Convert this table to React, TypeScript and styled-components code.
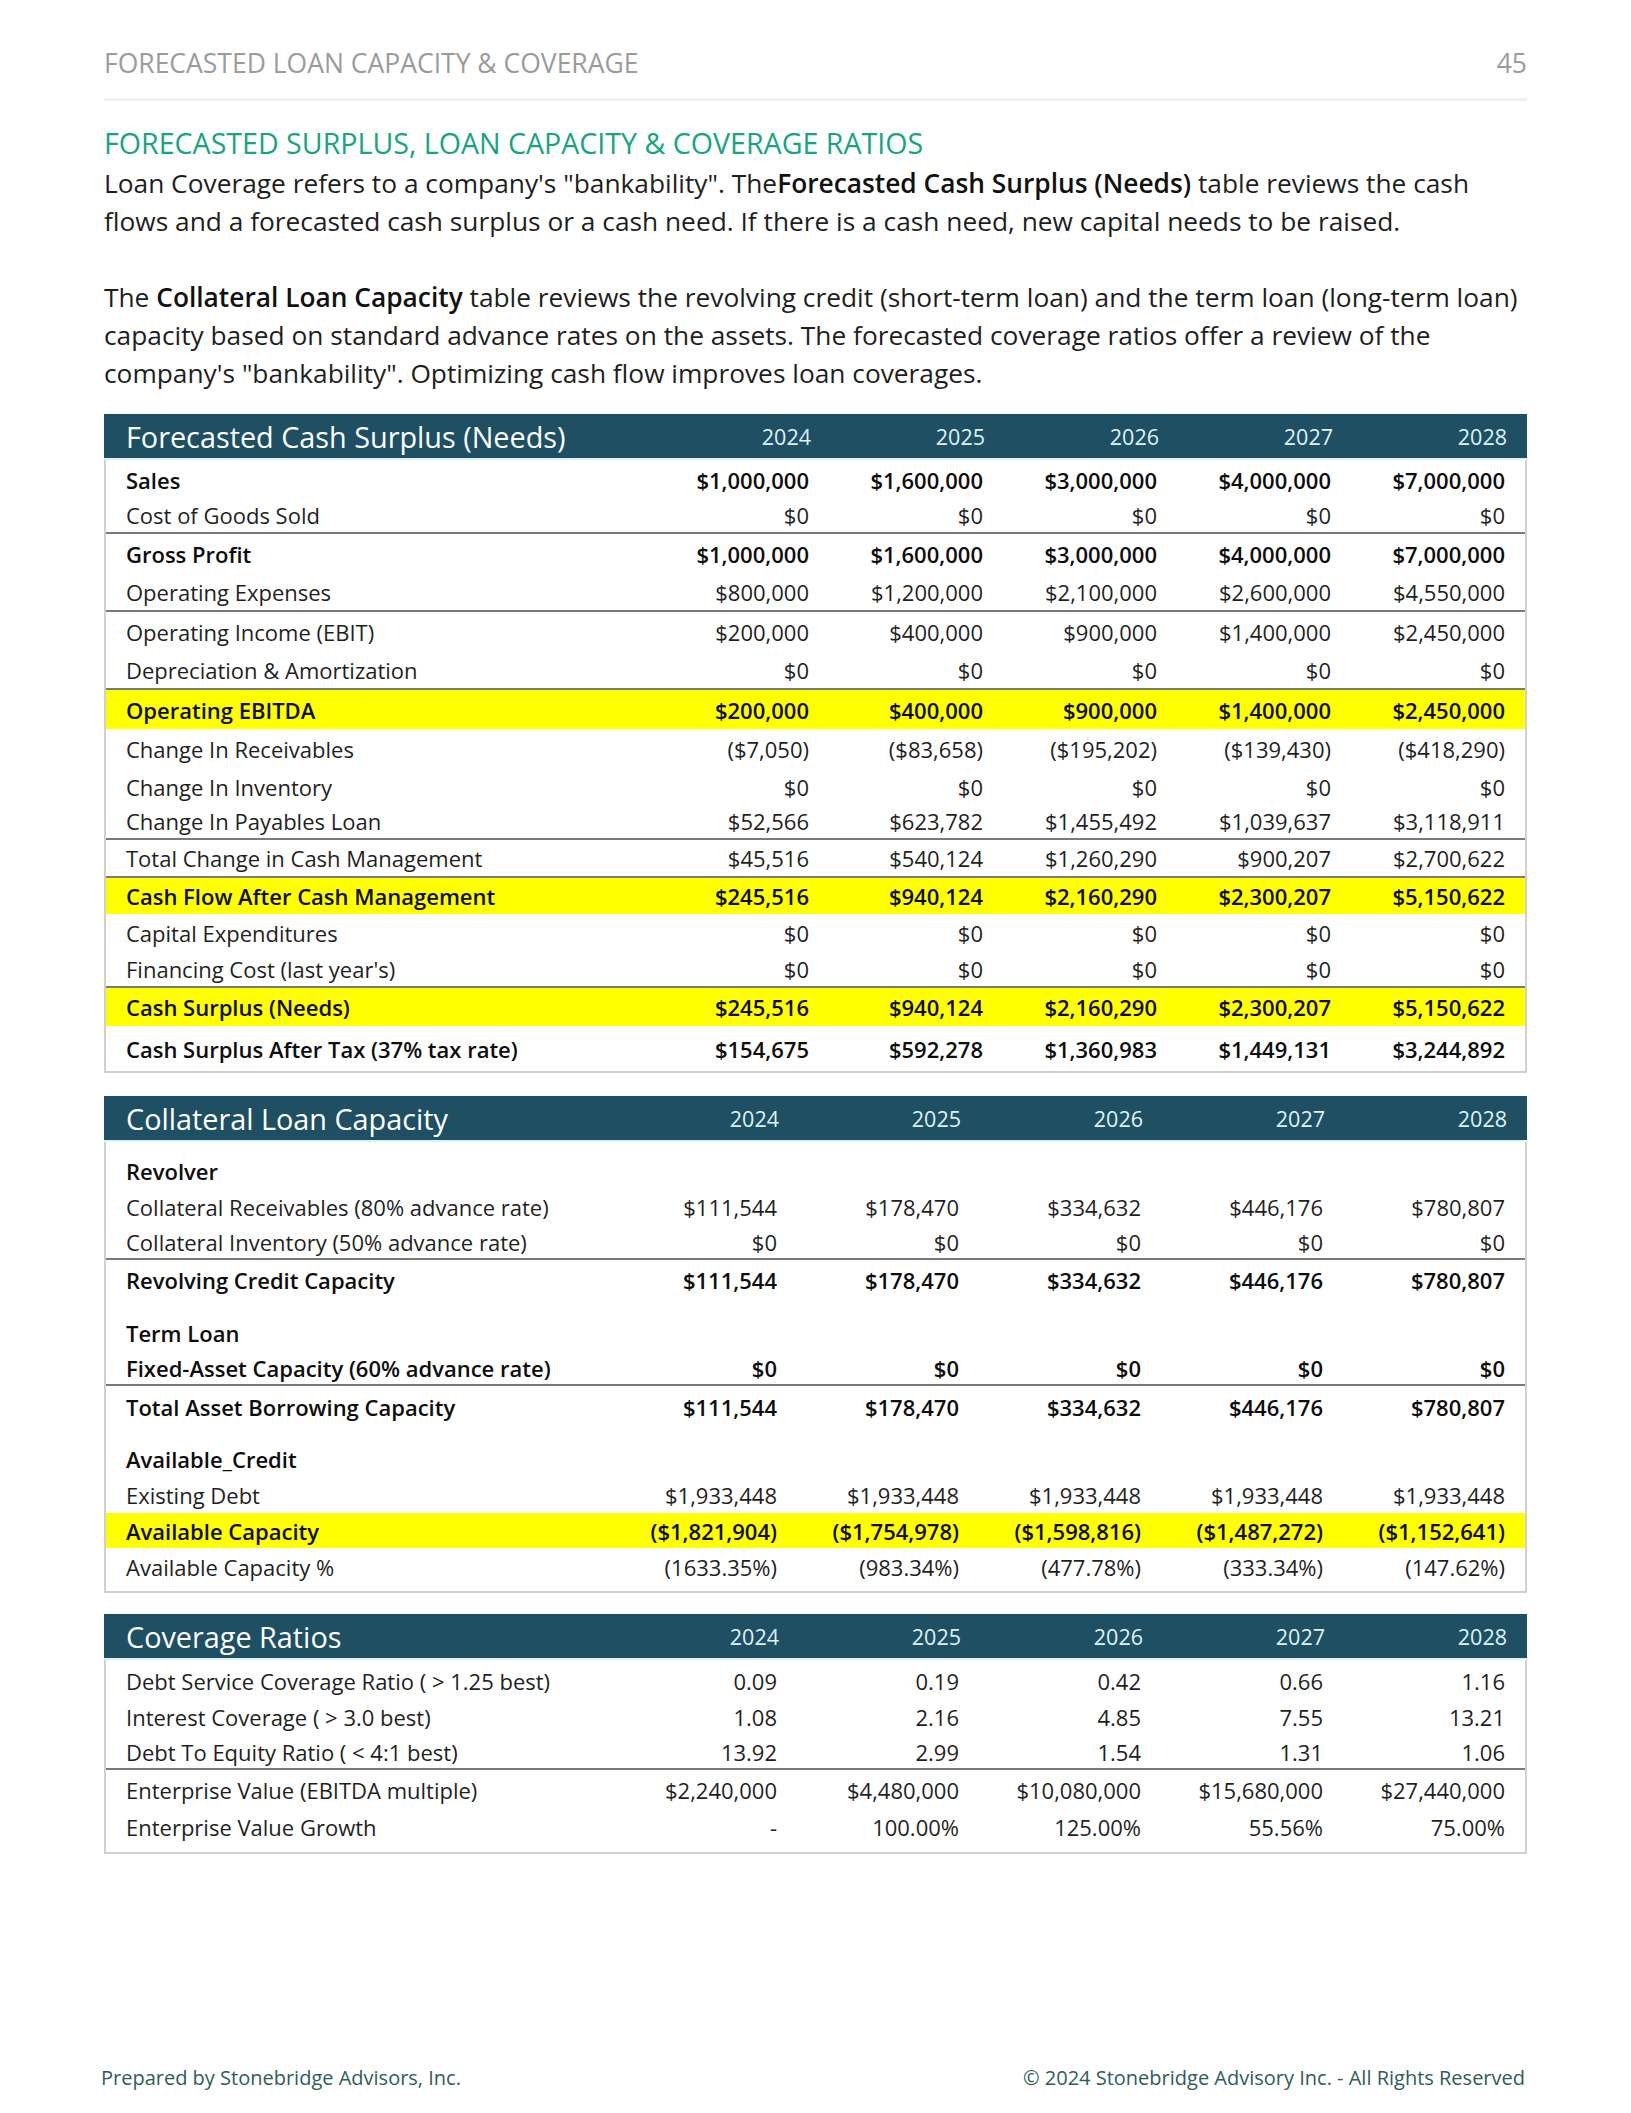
import React from "react"
import styled, { createGlobalStyle } from "styled-components"

const GlobalStyle = createGlobalStyle`
html, body {
  margin: 0;
  padding: 0;
  background: #fff;
}
body {
  font-family: "Open Sans", "Noto Sans", sans-serif;
  color: #1a1a1a;
}
`

const Page = styled.div`
width: 1631px;
height: 2113px;
box-sizing: border-box;
padding: 43px 104px 0 104px;
display: flex;
flex-direction: column;
`

const TopBar = styled.div`
display: flex;
justify-content: space-between;
align-items: center;
height: 40px;
padding-bottom: 15px;
border-bottom: 3px solid #efefef;
font-size: 26.5px;
color: #9b9b9b;
`

const SectionTitle = styled.h2`
margin: 23px 0 0 0;
font-size: 28.6px;
font-weight: 500;
color: #17a57f;
line-height: 38px;
`

const Para = styled.p<{ $gap?: number }>`
margin: ${props => props.$gap || 0}px 0 0 0;
font-size: 26.3px;
line-height: 38px;
color: #1e1e1e;
b { font-weight: 600; color: #111; }
`

const Table = styled.div<{ $top: number }>`
margin-top: ${props => props.$top}px;
border: 2px solid #d0d0d0;
border-top: none;
display: flex;
flex-direction: column;
`

const HeadRow = styled.div<{ $cols: string }>`
display: grid;
grid-template-columns: ${props => props.$cols};
align-items: center;
box-sizing: border-box;
height: 46px;
margin: 0 -2px;
padding: 0 20px 0 22px;
background: #1e4f63;
border-bottom: 2px solid #d9f3f7;
`

const HeadTitle = styled.div`
font-size: 28.8px;
color: #ffffff;
white-space: nowrap;
`

const HeadYear = styled.div`
font-size: 21.5px;
color: #def3f6;
text-align: right;
`

const Row = styled.div<{ $cols: string; $h: number; $pt?: number; $pb?: number; $hl?: boolean; $bold?: boolean; $line?: boolean }>`
display: grid;
grid-template-columns: ${props => props.$cols};
align-items: center;
box-sizing: border-box;
height: ${props => props.$h}px;
padding: ${props => props.$pt || 0}px 20px ${props => props.$pb || 0}px 20px;
background: ${props => props.$hl ? "#ffff00" : "transparent"};
font-size: 22px;
font-weight: ${props => props.$bold ? 600 : 400};
color: ${props => props.$bold ? "#0d0d0d" : "#1f1f1f"};
border-bottom: ${props => props.$line ? "2px solid #7a7a7a" : "none"};
`

const Label = styled.div`
white-space: nowrap;
`

const Num = styled.div`
text-align: right;
white-space: nowrap;
`

const Filler = styled.div`
flex: 1;
`

const Footer = styled.div`
display: flex;
justify-content: space-between;
align-items: center;
height: 40px;
margin: 0 2px 16px -3px;
font-size: 20px;
color: #2f5d58;
`

type RowData = {
  label: string
  values?: string[]
  h: number
  pt?: number
  pb?: number
  hl?: boolean
  bold?: boolean
  line?: boolean
}

const years = ["2024", "2025", "2026", "2027", "2028"]

const cashCols = "1fr 174px 174px 174px 174px 174px"
const wideCols = "1fr 182px 182px 182px 182px 182px"

const cashRows: RowData[] = [
  { label: "Sales", values: ["$1,000,000", "$1,600,000", "$3,000,000", "$4,000,000", "$7,000,000"], h: 38, pt: 2, bold: true },
  { label: "Cost of Goods Sold", values: ["$0", "$0", "$0", "$0", "$0"], h: 36, line: true },
  { label: "Gross Profit", values: ["$1,000,000", "$1,600,000", "$3,000,000", "$4,000,000", "$7,000,000"], h: 40, bold: true },
  { label: "Operating Expenses", values: ["$800,000", "$1,200,000", "$2,100,000", "$2,600,000", "$4,550,000"], h: 38, line: true },
  { label: "Operating Income (EBIT)", values: ["$200,000", "$400,000", "$900,000", "$1,400,000", "$2,450,000"], h: 39 },
  { label: "Depreciation & Amortization", values: ["$0", "$0", "$0", "$0", "$0"], h: 39, line: true },
  { label: "Operating EBITDA", values: ["$200,000", "$400,000", "$900,000", "$1,400,000", "$2,450,000"], h: 39, hl: true, bold: true },
  { label: "Change In Receivables", values: ["($7,050)", "($83,658)", "($195,202)", "($139,430)", "($418,290)"], h: 40 },
  { label: "Change In Inventory", values: ["$0", "$0", "$0", "$0", "$0"], h: 35 },
  { label: "Change In Payables Loan", values: ["$52,566", "$623,782", "$1,455,492", "$1,039,637", "$3,118,911"], h: 36, line: true },
  { label: "Total Change in Cash Management", values: ["$45,516", "$540,124", "$1,260,290", "$900,207", "$2,700,622"], h: 38, line: true },
  { label: "Cash Flow After Cash Management", values: ["$245,516", "$940,124", "$2,160,290", "$2,300,207", "$5,150,622"], h: 36, hl: true, bold: true },
  { label: "Capital Expenditures", values: ["$0", "$0", "$0", "$0", "$0"], h: 38 },
  { label: "Financing Cost (last year's)", values: ["$0", "$0", "$0", "$0", "$0"], h: 36, line: true },
  { label: "Cash Surplus (Needs)", values: ["$245,516", "$940,124", "$2,160,290", "$2,300,207", "$5,150,622"], h: 38, hl: true, bold: true },
  { label: "Cash Surplus After Tax (37% tax rate)", values: ["$154,675", "$592,278", "$1,360,983", "$1,449,131", "$3,244,892"], h: 45, pt: 1, bold: true },
]

const collateralRows: RowData[] = [
  { label: "Revolver", h: 47, pt: 10, bold: true },
  { label: "Collateral Receivables (80% advance rate)", values: ["$111,544", "$178,470", "$334,632", "$446,176", "$780,807"], h: 36 },
  { label: "Collateral Inventory (50% advance rate)", values: ["$0", "$0", "$0", "$0", "$0"], h: 35, line: true },
  { label: "Revolving Credit Capacity", values: ["$111,544", "$178,470", "$334,632", "$446,176", "$780,807"], h: 39, bold: true },
  { label: "Term Loan", h: 52, pt: 16, bold: true },
  { label: "Fixed-Asset Capacity (60% advance rate)", values: ["$0", "$0", "$0", "$0", "$0"], h: 35, bold: true, line: true },
  { label: "Total Asset Borrowing Capacity", values: ["$111,544", "$178,470", "$334,632", "$446,176", "$780,807"], h: 41, bold: true },
  { label: "Available_Credit", h: 49, pt: 14, bold: true },
  { label: "Existing Debt", values: ["$1,933,448", "$1,933,448", "$1,933,448", "$1,933,448", "$1,933,448"], h: 37 },
  { label: "Available Capacity", values: ["($1,821,904)", "($1,754,978)", "($1,598,816)", "($1,487,272)", "($1,152,641)"], h: 35, hl: true, bold: true },
  { label: "Available Capacity %", values: ["(1633.35%)", "(983.34%)", "(477.78%)", "(333.34%)", "(147.62%)"], h: 43, pb: 5 },
]

const coverageRows: RowData[] = [
  { label: "Debt Service Coverage Ratio ( > 1.25 best)", values: ["0.09", "0.19", "0.42", "0.66", "1.16"], h: 39, pt: 3 },
  { label: "Interest Coverage ( > 3.0 best)", values: ["1.08", "2.16", "4.85", "7.55", "13.21"], h: 36 },
  { label: "Debt To Equity Ratio ( < 4:1 best)", values: ["13.92", "2.99", "1.54", "1.31", "1.06"], h: 35, line: true },
  { label: "Enterprise Value (EBITDA multiple)", values: ["$2,240,000", "$4,480,000", "$10,080,000", "$15,680,000", "$27,440,000"], h: 40 },
  { label: "Enterprise Value Growth", values: ["-", "100.00%", "125.00%", "55.56%", "75.00%"], h: 42, pb: 9 },
]

const DataTable: React.FC<{ title: string; cols: string; rows: RowData[]; top: number }> = ({ title, cols, rows, top }) => {
  return (
    <Table $top={top}>
      <HeadRow $cols={cols}>
        <HeadTitle>{title}</HeadTitle>
        {years.map(y => <HeadYear key={y}>{y}</HeadYear>)}
      </HeadRow>
      {rows.map((r, i) => (
        <Row key={i} $cols={cols} $h={r.h} $pt={r.pt} $pb={r.pb} $hl={r.hl} $bold={r.bold} $line={r.line}>
          <Label>{r.label}</Label>
          {(r.values || ["", "", "", "", ""]).map((v, j) => <Num key={j}>{v}</Num>)}
        </Row>
      ))}
    </Table>
  )
}

const App: React.FC = () => {
  return (
    <>
      <GlobalStyle />
      <Page>
        <TopBar>
          <span>FORECASTED LOAN CAPACITY &amp; COVERAGE</span>
          <span>45</span>
        </TopBar>
        <SectionTitle>FORECASTED SURPLUS, LOAN CAPACITY &amp; COVERAGE RATIOS</SectionTitle>
        <Para $gap={2}>
          Loan Coverage refers to a company's "bankability". The<b>Forecasted Cash Surplus (Needs)</b> table reviews the cash flows and a forecasted cash surplus or a cash need. If there is a cash need, new capital needs to be raised.
        </Para>
        <Para $gap={38}>
          The <b>Collateral Loan Capacity</b> table reviews the revolving credit (short-term loan) and the term loan (long-term loan) capacity based on standard advance rates on the assets. The forecasted coverage ratios offer a review of the company's "bankability". Optimizing cash flow improves loan coverages.
        </Para>
        <DataTable title="Forecasted Cash Surplus (Needs)" cols={cashCols} rows={cashRows} top={22} />
        <DataTable title="Collateral Loan Capacity" cols={wideCols} rows={collateralRows} top={23} />
        <DataTable title="Coverage Ratios" cols={wideCols} rows={coverageRows} top={21} />
        <Filler />
        <Footer>
          <span>Prepared by Stonebridge Advisors, Inc.</span>
          <span>© 2024 Stonebridge Advisory Inc. - All Rights Reserved</span>
        </Footer>
      </Page>
    </>
  )
}

export default App
